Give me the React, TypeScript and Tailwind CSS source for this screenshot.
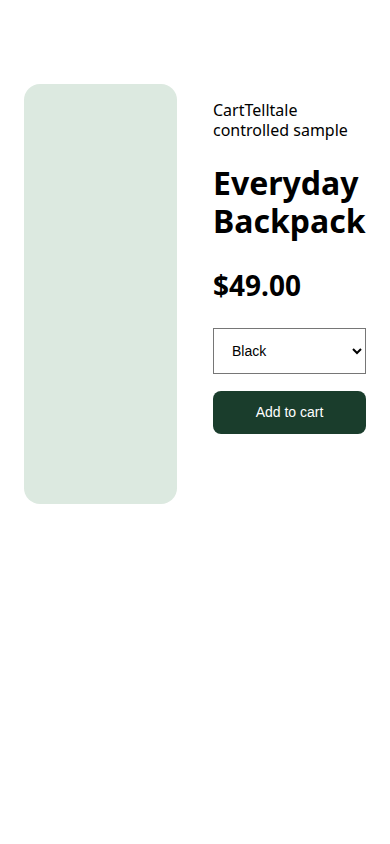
export default function App() {
  return (
    <main className="min-h-[844px] bg-white px-6 pt-[84px]">
      <div className="grid grid-cols-2 gap-9">
        <div className="h-[420px] rounded-2xl bg-[#dce9e0]" />
        <div className="pt-[16px] font-['Noto_Sans',sans-serif] text-black">
          <p className="text-[16px] leading-[20px]">CartTelltale controlled sample</p>
          <h1 className="mt-[24px] text-[32px] font-bold leading-[38px]">Everyday Backpack</h1>
          <p className="mt-[27px] text-[28px] font-bold leading-[36px]">$49.00</p>
          <select className="mt-[25px] h-[46px] w-full border border-[#767676] bg-white pl-[14px] pr-1 font-['Liberation_Sans',sans-serif] text-[14px]">
            <option>Black</option>
          </select>
          <button className="mt-[17px] h-[43px] w-full rounded-lg bg-[#1a3d2c] font-['Liberation_Sans',sans-serif] text-[14px] text-white">
            Add to cart
          </button>
        </div>
      </div>
    </main>
  );
}
